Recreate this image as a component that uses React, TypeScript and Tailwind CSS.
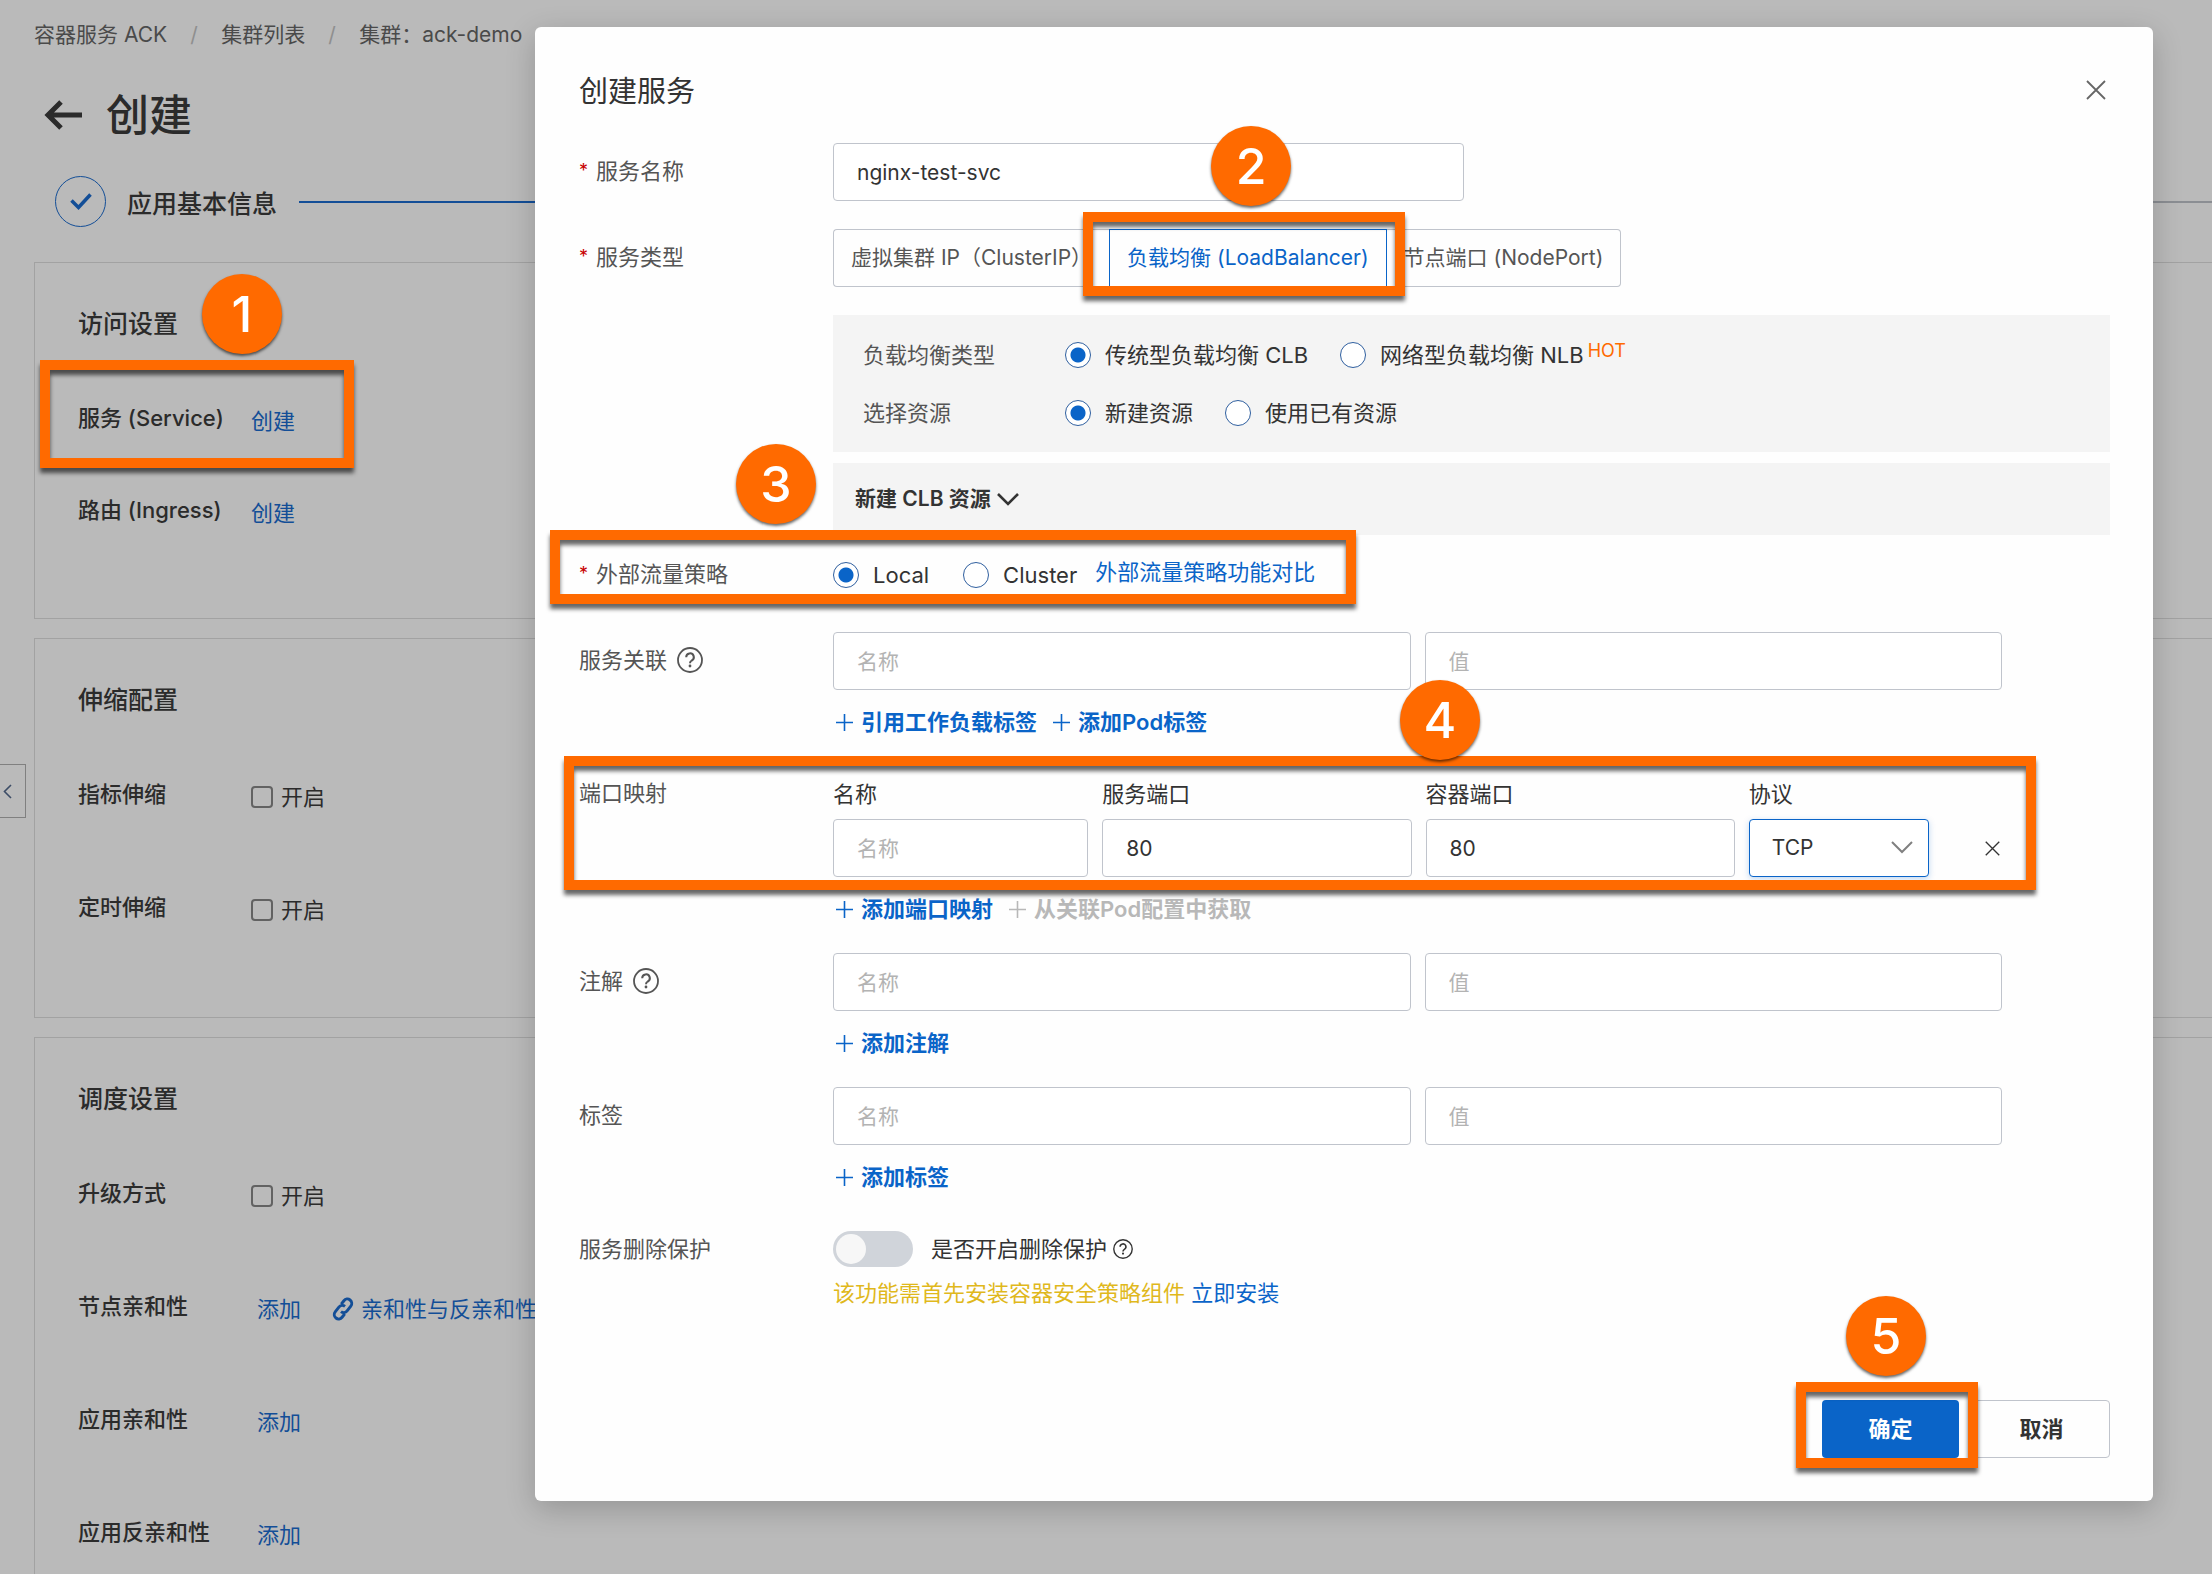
import React from 'react';

type IconProps = { className?: string };

function HelpIcon({ className }: IconProps) {
  return (
    <svg viewBox="0 0 26 26" fill="none" stroke="currentColor" strokeWidth="1.8" className={className} aria-hidden="true">
      <circle cx="13" cy="13" r="12" />
      <path d="M9.2 10.2a3.8 3.8 0 1 1 5.6 3.3c-1.2.7-1.8 1.2-1.8 2.7" strokeWidth="2" />
      <circle cx="13" cy="19" r="1.4" fill="currentColor" stroke="none" />
    </svg>
  );
}

function CloseIcon({ className }: IconProps) {
  return (
    <svg viewBox="0 0 20 20" fill="none" stroke="currentColor" strokeWidth="1.8" className={className} aria-hidden="true">
      <path d="M1 1l18 18M19 1L1 19" />
    </svg>
  );
}

function PlusIcon({ className }: IconProps) {
  return (
    <svg viewBox="0 0 17 17" fill="none" stroke="currentColor" strokeWidth="1.6" className={className} aria-hidden="true">
      <path d="M8.5 0v17M0 8.5h17" />
    </svg>
  );
}

function LinkIcon({ className }: IconProps) {
  return (
    <svg viewBox="-11 -11 22 22" fill="none" stroke="currentColor" strokeWidth="2.7" className={className} aria-hidden="true">
      <g transform="rotate(38)">
        <path d="M-4-2.5V-6.500a4 4 0 0 1 8 0V-1a4 4 0 0 1-4 4" />
        <path d="M4 2.500V6.500a4 4 0 0 1-8 0V1a4 4 0 0 1 4-4" />
      </g>
    </svg>
  );
}

/* Tutorial marker: an orange frame around a control with a numbered disc. */
function Callout({ n, frame, disc }: { n: number; frame: string; disc: string }) {
  return (
    <div className={`pointer-events-none absolute z-10 ${frame}`}>
      <div className="absolute inset-0 border-[10px] border-[#ff6a00] drop-shadow-[0_5px_2px_rgba(0,0,0,0.6)]" />
      <div
        className={`absolute flex size-20 items-center justify-center rounded-full bg-[#ff6a00] text-[50px] leading-none font-medium text-white shadow-[0_2px_3px_rgba(0,0,0,0.6)] ${disc}`}
      >
        {n}
      </div>
    </div>
  );
}

function SettingRow({ label, tall = true, children }: { label: string; tall?: boolean; children: React.ReactNode }) {
  return (
    <div className={`flex items-center ${tall ? 'h-[113px]' : 'h-[92px]'}`}>
      <span className="w-[173px] shrink-0 font-medium whitespace-nowrap">{label}</span>
      <div className="flex items-center pt-1.5">{children}</div>
    </div>
  );
}

function EnableBox() {
  return (
    <label className="flex items-center gap-2">
      <input type="checkbox" className="size-[22px] appearance-none rounded-[4px] border-2 border-[#626262]" />
      开启
    </label>
  );
}

function PageLink({ children }: { children: React.ReactNode }) {
  return (
    <a href="#" className="whitespace-nowrap text-[#134e97]">
      {children}
    </a>
  );
}

function BackgroundPage() {
  return (
    <div className="pt-[19px] pl-[34px] text-[#2b2b2b]">
      <nav className="flex h-8 items-center text-[21px] whitespace-nowrap text-[#4a4a4a]">
        <a href="#">容器服务 ACK</a>
        <span className="w-[54px] text-center text-[#8f8f8f]">/</span>
        <a href="#">集群列表</a>
        <span className="w-[54px] text-center text-[#8f8f8f]">/</span>
        <a href="#">集群：ack-demo</a>
      </nav>

      <div className="mt-[34px] flex h-[60px] items-center gap-6 pl-2.5">
        <button type="button" aria-label="返回">
          <svg viewBox="0 0 38 32" className="h-8 w-[38px]" fill="none" stroke="currentColor" strokeWidth="5" aria-hidden="true">
            <path d="M17 3L4 16l13 13M4 16h34" />
          </svg>
        </button>
        <h1 className="text-[43px] leading-none font-medium">创建</h1>
      </div>

      <div className="mt-[31px] flex items-center pl-[21px]">
        <span className="flex size-[51px] items-center justify-center rounded-full border border-[#134e97] text-[#134e97]">
          <svg viewBox="0 0 22 17" className="h-[17px] w-[22px]" fill="none" stroke="currentColor" strokeWidth="3.5" aria-hidden="true">
            <path d="M1.500 7.500l7 7L20.500 1.500" />
          </svg>
        </span>
        <span className="pt-1 pl-[21px] text-[25px] font-medium">应用基本信息</span>
        <span className="ml-[22px] h-0.5 flex-1 bg-[#134e97]" />
        <span className="h-0.5 flex-1 bg-[#8b8e93]" />
      </div>

      <section className="relative mt-[35px] border border-r-0 border-[#a2a2a2] pt-[43px] pb-[62px] pl-[43px]">
        <h2 className="mb-[30px] h-9 text-[25px] leading-9 font-medium">访问设置</h2>
        <SettingRow label="服务 (Service)" tall={false}>
          <PageLink>创建</PageLink>
        </SettingRow>
        <SettingRow label="路由 (Ingress)" tall={false}>
          <PageLink>创建</PageLink>
        </SettingRow>
        <Callout n={1} frame="top-[97px] left-[5px] h-[108px] w-[314px]" disc="-top-[86px] left-[162px]" />
      </section>

      <section className="mt-[19px] border border-r-0 border-[#a2a2a2] pt-[43px] pb-[54px] pl-[43px]">
        <h2 className="mb-[19px] h-9 text-[25px] leading-9 font-medium">伸缩配置</h2>
        <SettingRow label="指标伸缩">
          <EnableBox />
        </SettingRow>
        <SettingRow label="定时伸缩">
          <EnableBox />
        </SettingRow>
      </section>

      <section className="mt-[19px] border border-r-0 border-[#a2a2a2] pt-[43px] pb-[54px] pl-[43px]">
        <h2 className="mb-[19px] h-9 text-[25px] leading-9 font-medium">调度设置</h2>
        <SettingRow label="升级方式">
          <EnableBox />
        </SettingRow>
        <SettingRow label="节点亲和性">
          <div className="flex items-center gap-[30px] pl-1.5">
            <PageLink>添加</PageLink>
            <a href="#" className="flex items-center gap-1.5 whitespace-nowrap text-[#134e97]">
              <LinkIcon className="size-6" />
              亲和性与反亲和性
            </a>
          </div>
        </SettingRow>
        <SettingRow label="应用亲和性">
          <div className="pl-1.5">
            <PageLink>添加</PageLink>
          </div>
        </SettingRow>
        <SettingRow label="应用反亲和性">
          <div className="pl-1.5">
            <PageLink>添加</PageLink>
          </div>
        </SettingRow>
      </section>

      <button
        type="button"
        aria-label="收起"
        className="absolute top-[764px] left-0 flex h-[54px] w-[26px] items-center border border-l-0 border-[#808080] pl-[3px] text-[#3c4c66]"
      >
        <svg viewBox="0 0 9 15" className="h-[15px] w-[9px]" fill="none" stroke="currentColor" strokeWidth="1.6" aria-hidden="true">
          <path d="M8 1L1.500 7.500 8 14" />
        </svg>
      </button>
    </div>
  );
}

const inputClass =
  'h-[58px] w-full min-w-0 rounded-[4px] border border-[#c0c4cc] bg-white px-[23px] text-[21px] text-[#333] placeholder:text-[#b3b3b3] outline-none';

function FieldRow({
  label,
  htmlFor,
  required,
  help,
  className = 'mt-7',
  labelHeight = 'h-[58px]',
  children,
}: {
  label: string;
  htmlFor?: string;
  required?: boolean;
  help?: boolean;
  className?: string;
  labelHeight?: string;
  children: React.ReactNode;
}) {
  return (
    <div className={`relative grid grid-cols-[254px_minmax(0,1fr)] ${className}`}>
      <label htmlFor={htmlFor} className={`flex items-center pb-0.5 text-[#555] ${labelHeight}`}>
        {required && <span className="w-[17px] text-[18px] text-[#c80000]">*</span>}
        {label}
        {help && <HelpIcon className="ml-2.5 size-[26px]" />}
      </label>
      {children}
    </div>
  );
}

function Radio({ name, label, checked, hot }: { name: string; label: string; checked?: boolean; hot?: boolean }) {
  return (
    <label className="flex items-center gap-[14px] whitespace-nowrap">
      <input
        type="radio"
        name={name}
        defaultChecked={checked}
        className="size-[26px] shrink-0 appearance-none rounded-full border border-[#2f5f9f] bg-white checked:bg-[radial-gradient(circle,#0a64c8_7px,#fff_8px)]"
      />
      <span>
        {label}
        {hot && <sup className="-top-1.5 ml-1 align-baseline text-[18px] text-[#ff6a00]">HOT</sup>}
      </span>
    </label>
  );
}

function AddButton({ children, disabled }: { children: React.ReactNode; disabled?: boolean }) {
  return (
    <button
      type="button"
      disabled={disabled}
      className="flex items-center gap-2 font-semibold whitespace-nowrap text-[#0a64c8] disabled:text-[#b8b8b8]"
    >
      <PlusIcon className="size-[17px]" />
      {children}
    </button>
  );
}

function PairField({ id, children }: { id: string; children: React.ReactNode }) {
  return (
    <div className="pr-[108px]">
      <div className="flex gap-[14px]">
        <input id={id} className={inputClass} placeholder="名称" />
        <input aria-label="值" className={inputClass} placeholder="值" />
      </div>
      <div className="mt-4 flex h-8 items-center gap-4 pl-[3px]">{children}</div>
    </div>
  );
}

function ServiceDialog() {
  return (
    <div
      role="dialog"
      aria-labelledby="dialog-title"
      className="rounded-[6px] bg-[#fefefe] pt-[45px] pr-[43px] pb-[43px] pl-11 text-[#333] shadow-[0_8px_30px_rgba(0,0,0,0.2)]"
    >
      <header className="flex h-10 items-start justify-between">
        <h2 id="dialog-title" className="text-[29px] leading-10">
          创建服务
        </h2>
        <button type="button" aria-label="关闭" className="mt-2 mr-1 text-[#666]">
          <CloseIcon className="size-5" />
        </button>
      </header>

      <FieldRow label="服务名称" htmlFor="svc-name" required className="mt-[31px]">
        <input id="svc-name" className={`${inputClass} max-w-[631px]`} defaultValue="nginx-test-svc" />
      </FieldRow>

      <FieldRow label="服务类型" required>
        <div>
          <div className="flex h-[58px] text-[21px] text-[#555]">
            <button type="button" className="rounded-l-[4px] border border-r-0 border-[#c0c4cc] px-[17px] whitespace-nowrap">
              虚拟集群 IP（ClusterIP）
            </button>
            <div className="relative">
              <button type="button" className="h-full border border-[#0a64c8] px-[17px] whitespace-nowrap text-[#0a64c8]">
                负载均衡 (LoadBalancer)
              </button>
              <Callout n={2} frame="-top-[17px] -right-[18px] -left-[26px] h-[84px]" disc="-top-[86px] left-[128px]" />
            </div>
            <button type="button" className="rounded-r-[4px] border border-l-0 border-[#c0c4cc] px-[17px] whitespace-nowrap">
              节点端口 (NodePort)
            </button>
          </div>

          <div className="mt-7 grid grid-cols-[202px_1fr] gap-y-[26px] bg-[#f4f4f4] pt-6 pb-[23px] pl-[30px]">
            <span className="leading-8 text-[#555]">负载均衡类型</span>
            <div className="flex h-8 items-center gap-8">
              <Radio name="lb-type" label="传统型负载均衡 CLB" checked />
              <Radio name="lb-type" label="网络型负载均衡 NLB" hot />
            </div>
            <span className="leading-8 text-[#555]">选择资源</span>
            <div className="flex h-8 items-center gap-8">
              <Radio name="resource" label="新建资源" checked />
              <Radio name="resource" label="使用已有资源" />
            </div>
          </div>

          <button
            type="button"
            className="mt-[11px] flex h-[72px] w-full items-center gap-1.5 bg-[#f4f4f4] pl-[22px] text-[21px] font-semibold"
          >
            新建 CLB 资源
            <svg viewBox="0 0 22 13" className="h-[13px] w-[22px]" fill="none" stroke="currentColor" strokeWidth="2.6" aria-hidden="true">
              <path d="M1 1l10 10L21 1" />
            </svg>
          </button>
        </div>
      </FieldRow>

      <FieldRow label="外部流量策略" required className="mt-[11px]">
        <div className="flex items-center gap-[34px]">
          <Radio name="policy" label="Local" checked />
          <div className="flex items-center gap-[18px]">
            <Radio name="policy" label="Cluster" />
            <a href="#" className="pb-1.5 whitespace-nowrap text-[#0a64c8]">
              外部流量策略功能对比
            </a>
          </div>
        </div>
        <Callout n={3} frame="-top-4 -left-[29px] h-[74px] w-[806px]" disc="-top-[86px] left-[186px]" />
      </FieldRow>

      <FieldRow label="服务关联" htmlFor="selector" help>
        <PairField id="selector">
          <AddButton>引用工作负载标签</AddButton>
          <AddButton>添加Pod标签</AddButton>
        </PairField>
      </FieldRow>

      <FieldRow label="端口映射" htmlFor="port-name" className="mt-10" labelHeight="h-8">
        <div className="pr-[108px]">
          <div className="grid grid-cols-[255fr_309fr_309fr_180fr_59fr] gap-x-[14px] gap-y-[9px] leading-8">
            <label htmlFor="port-name">名称</label>
            <label htmlFor="svc-port">服务端口</label>
            <label htmlFor="container-port">容器端口</label>
            <label htmlFor="protocol">协议</label>
            <span />
            <input id="port-name" className={inputClass} placeholder="名称" />
            <input id="svc-port" className={inputClass} defaultValue="80" />
            <input id="container-port" className={inputClass} defaultValue="80" />
            <div className="relative">
              <select
                id="protocol"
                className="h-[58px] w-full appearance-none rounded-[4px] border border-[#0a64c8] bg-white px-[22px] text-[21px] shadow-[0_2px_6px_rgba(10,100,200,0.25)] outline-none"
              >
                <option>TCP</option>
                <option>UDP</option>
              </select>
              <svg
                viewBox="0 0 22 13"
                className="pointer-events-none absolute top-[22px] right-4 h-[13px] w-[22px] text-[#808080]"
                fill="none"
                stroke="currentColor"
                strokeWidth="2"
                aria-hidden="true"
              >
                <path d="M1 1l10 10L21 1" />
              </svg>
            </div>
            <button type="button" aria-label="删除端口" className="flex items-center justify-end pr-0.5">
              <CloseIcon className="size-[15px]" />
            </button>
          </div>
          <div className="mt-4 flex h-8 items-center gap-4 pl-[3px]">
            <AddButton>添加端口映射</AddButton>
            <AddButton disabled>从关联Pod配置中获取</AddButton>
          </div>
        </div>
        <Callout n={4} frame="-top-[22px] right-[74px] -left-[15px] h-[134px]" disc="-top-[76px] left-[836px]" />
      </FieldRow>

      <FieldRow label="注解" htmlFor="annotation" help>
        <PairField id="annotation">
          <AddButton>添加注解</AddButton>
        </PairField>
      </FieldRow>

      <FieldRow label="标签" htmlFor="tag">
        <PairField id="tag">
          <AddButton>添加标签</AddButton>
        </PairField>
      </FieldRow>

      <FieldRow label="服务删除保护" htmlFor="protect">
        <div>
          <div className="flex h-14 items-center">
            <input
              id="protect"
              type="checkbox"
              role="switch"
              className="h-9 w-20 appearance-none rounded-full bg-[#d0d4da] p-[3px] before:block before:size-[30px] before:rounded-full before:bg-[#f7f7f7] before:content-['']"
            />
            <span className="pl-[18px]">是否开启删除保护</span>
            <HelpIcon className="ml-1.5 size-5" />
          </div>
          <p className="h-8 leading-8 text-[#e0b81c]">
            该功能需首先安装容器安全策略组件{' '}
            <a href="#" className="text-[#0a64c8]">
              立即安装
            </a>
          </p>
        </div>
      </FieldRow>

      <footer className="mt-[91px] flex justify-end gap-[14px] font-semibold">
        <div className="relative">
          <button type="button" className="h-[58px] w-[137px] rounded-[4px] bg-[#0a64c8] text-white">
            确定
          </button>
          <Callout n={5} frame="-top-[18px] -right-[19px] -left-[26px] h-[86px]" disc="-top-[86px] left-[50px]" />
        </div>
        <button type="button" className="h-[58px] w-[137px] rounded-[4px] border border-[#c0c4cc]">
          取消
        </button>
      </footer>
    </div>
  );
}

export default function App() {
  return (
    <main className="relative h-screen overflow-hidden bg-[#bababa] font-['Inter','Noto_Sans_CJK_SC',sans-serif] text-[22px] leading-8">
      <BackgroundPage />
      <div className="absolute inset-0 pt-[27px] pr-[59px] pl-[535px]">
        <ServiceDialog />
      </div>
    </main>
  );
}
